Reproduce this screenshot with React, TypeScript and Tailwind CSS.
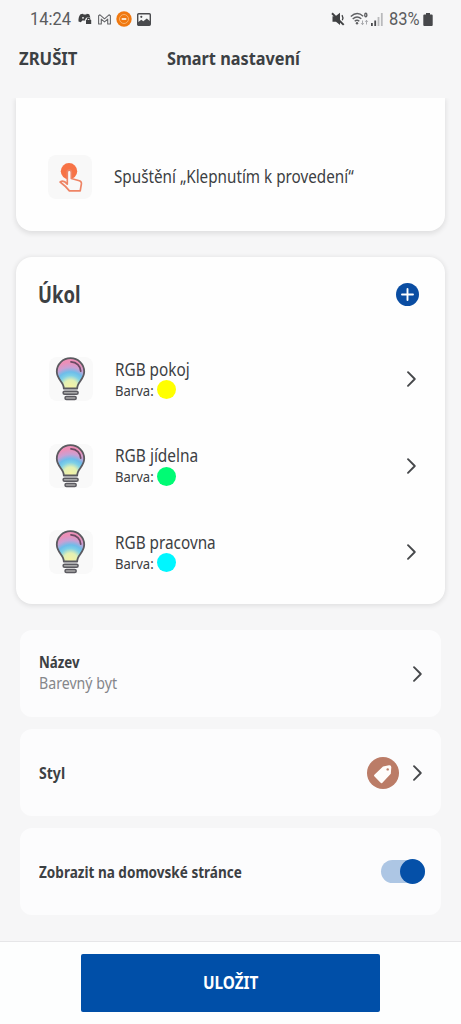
import { useState } from "react";
import clsx from "clsx";

const tasks = [
  { name: "RGB pokoj", color: "bg-[#ffff00]", fit: "scale-x-[0.85]" },
  { name: "RGB jídelna", color: "bg-[#00fb74]", fit: "scale-x-[0.858]" },
  { name: "RGB pracovna", color: "bg-[#00f6ff]", fit: "scale-x-[0.85]" },
];

// Narrow label, squeezed horizontally to get a condensed face
function Label({ text, className }: { text: string; className: string }) {
  return (
    <span
      className={clsx("block w-max origin-left whitespace-nowrap", className)}
    >
      {text}
    </span>
  );
}

function Chevron() {
  return (
    <svg width="12" height="18" viewBox="0 0 12 18" fill="none">
      <path
        d="M2 2.2 8.8 9 2 15.8"
        stroke="#46484b"
        strokeWidth="1.9"
        strokeLinecap="round"
        strokeLinejoin="round"
      />
    </svg>
  );
}

function Bulb({ id }: { id: string }) {
  return (
    <svg width="44" height="46" viewBox="0 0 44 46" fill="none">
      <defs>
        <radialGradient
          id={id}
          gradientUnits="userSpaceOnUse"
          cx="21.5"
          cy="30"
          r="29"
        >
          <stop offset="0" stopColor="#f6f2a4" />
          <stop offset="0.24" stopColor="#e3f0b4" />
          <stop offset="0.4" stopColor="#7fd0e6" />
          <stop offset="0.52" stopColor="#6dbdea" />
          <stop offset="0.68" stopColor="#c9a0d4" />
          <stop offset="0.85" stopColor="#ec90b8" />
        </radialGradient>
      </defs>
      <path
        d="M14.8 31.5c.2-6.7-7-8.6-7-16.9a13.7 13.4 0 0 1 27.4 0c0 8.3-7.2 10.2-7 16.9z"
        fill={`url(#${id})`}
        stroke="#5b5a60"
        strokeWidth="1.8"
        strokeLinejoin="round"
      />
      <path
        d="M22 4.8c5.6.2 9.4 4 9.7 9.2"
        stroke="#6b4a63"
        strokeWidth="1.8"
        strokeLinecap="round"
      />
      <rect
        x="14.1"
        y="34.2"
        width="15"
        height="3"
        rx="1.5"
        fill="#aaa"
        stroke="#5b5a60"
        strokeWidth="1.5"
      />
      <rect
        x="16"
        y="39.4"
        width="11.2"
        height="3"
        rx="1.5"
        fill="#aaa"
        stroke="#5b5a60"
        strokeWidth="1.5"
      />
    </svg>
  );
}

function TapIcon() {
  return (
    <svg width="44" height="44" viewBox="0 0 44 44" fill="none">
      <circle cx="21" cy="16.3" r="8.2" fill="#f77346" />
      <path
        d="M19.3 29.2V17.2a2 2 0 0 1 4 0v6.3l8 2.2c1.6.5 2.3 1.6 2.1 3.2l-1.2 7H21.4c-2.600-3.300-5.600-6.200-9.300-8.900 2.600-1.700 5.200-.3 7.200 2.200z"
        fill="#f8f8f8"
        stroke="#ee8465"
        strokeWidth="1.7"
        strokeLinejoin="round"
      />
    </svg>
  );
}

function StatusBar() {
  return (
    <div className="flex h-[38px] items-center pr-[28px] pl-[30px] font-[Roboto] text-[17.5px] text-[#5b5c5e]">
      <span className="w-[48px] origin-left scale-x-[0.94] whitespace-nowrap">
        14:24
      </span>
      <svg width="15" height="12" viewBox="0 0 15 12" fill="#3f4042">
        <path d="M2.5 1.2 5 .8l.6.6h2.6l.6-.6 2.400.4 1.200 3.300H8.800L7.200 6v1.500H4.400L2.800 9.200.5 8.400C.3 5.800.9 3.100 2.500 1.200z" />
        <circle cx="5" cy="4.8" r=".9" fill="#f6f7f7" />
        <path d="M8.7 7V6.400a1.900 1.900 0 0 1 3.800 0V7h.7v4H8v-4zm1-.1h1.800a.9.9 0 0 0-1.800 0z" />
      </svg>
      <svg
        className="ml-[5px]"
        width="13"
        height="11"
        viewBox="0 0 13 11"
        fill="none"
        stroke="#66676a"
        strokeWidth="1.1"
        strokeLinejoin="round"
      >
        <path d="M.6 10V1.800L2 .8l4.500 4L11 .8l1.400 1V10H9.700V5.100L6.500 7.900 3.300 5.100V10z" />
      </svg>
      <svg className="ml-[5px]" width="16" height="16" viewBox="0 0 16 16">
        <circle cx="8" cy="8" r="7.7" fill="#f0780f" />
        <circle
          cx="8"
          cy="8"
          r="4.5"
          fill="none"
          stroke="#f7b26e"
          strokeWidth="1"
        />
        <path d="M5.700 7h4.600v2H5.700z" fill="#fce3c8" />
      </svg>
      <svg className="ml-[5px]" width="14" height="13" viewBox="0 0 14 13">
        <rect
          x=".7"
          y=".7"
          width="12.6"
          height="11.6"
          rx="1"
          fill="#f6f7f7"
          stroke="#4a4b4e"
          strokeWidth="1.4"
        />
        <path d="M1 12V9.300L4.300 6.800 6.300 8.300 9.800 5.500 13 8.300V12z" fill="#4a4b4e" />
        <circle cx="4.3" cy="3.8" r="1.1" fill="#4a4b4e" />
      </svg>

      <svg
        className="ml-auto"
        width="14"
        height="14"
        viewBox="0 0 14 14"
        fill="#3f4042"
      >
        <path d="M1.500 4.200h3L9 .8v12.200L5 9.800H1.500z" />
        <path
          d="M11 3.200q1.600 2.500.3 5"
          fill="none"
          stroke="#3f4042"
          strokeWidth="1.3"
        />
        <path d="M1 1.200 12.700 12.900" stroke="#3f4042" strokeWidth="2" />
      </svg>
      <svg
        className="ml-[5px]"
        width="19"
        height="14"
        viewBox="0 0 19 14"
        fill="none"
        stroke="#5f6063"
        strokeWidth="1.4"
      >
        <path d="M.8 4.500q6.200-5.700 12.400-.3M2.700 7q4.300-4 8.600-.2M4.700 9.200q2.300-2 4.600 0" />
        <circle cx="7" cy="11.2" r="1.2" fill="#5f6063" stroke="none" />
        <path d="M15.800 1.200c1.300 0 1.500 3.600 0 3.600s-1.300-3.600 0-3.600z" />
        <path
          d="M12.500 8.500v4M11.200 11.200l1.300 1.500 1.300-1.500M16.500 12.500v-4M15.200 9.800l1.300-1.500 1.300 1.500"
          strokeWidth=".8"
          stroke="#96979a"
        />
      </svg>
      <svg className="ml-[2px]" width="12" height="13" viewBox="0 0 12 13">
        <path d="M0 10h1.800v3H0zM3.300 7.500h1.800V13H3.300z" fill="#4a4b4e" />
        <path d="M6.600 4h1.800v9H6.600zM9.900 0h1.800v13H9.900z" fill="#b9babc" />
      </svg>
      <span className="ml-[6px] w-[34px] origin-left scale-x-[0.94] whitespace-nowrap">
        83%
      </span>
      <svg width="10" height="13" viewBox="0 0 10 13" fill="#47484b">
        <path d="M3 0h4v1.500h1.700q1 0 1 1V12q0 1-1 1H1.300q-1 0-1-1V2.500q0-1 1-1H3z" />
      </svg>
    </div>
  );
}

export default function App() {
  const [visible, setVisible] = useState(true);

  return (
    <div className="flex h-[1024px] w-[461px] flex-col overflow-hidden bg-[#f6f6f7] font-['Noto_Sans','Open_Sans',sans-serif] text-[#3c4043]">
      <StatusBar />
      <header className="flex h-[60px] shrink-0 pt-[7px] pl-[19px] font-bold">
        <button className="block h-[26px] w-[148px] text-left">
          <Label
            text="ZRUŠIT"
            className="scale-x-[0.9] text-[18.5px] leading-[26px]"
          />
        </button>
        <h1>
          <Label
            text="Smart nastavení"
            className="scale-x-[0.88] text-[18.5px] leading-[26px]"
          />
        </h1>
      </header>

      <main className="h-[843px] shrink-0 overflow-hidden px-4">
        <section className="flex h-[133px] items-end rounded-b-[16px] bg-[#fefefe] pb-[32px] pl-[32px] shadow-[0_2px_5px_1px_rgba(0,0,0,0.09)]">
          <div className="flex h-[44px] items-center">
            <div className="h-[44px] w-[44px] rounded-lg bg-[#f8f8f8]">
              <TapIcon />
            </div>
            <Label
              text="Spuštění „Klepnutím k provedení“"
              className="mb-[2px] ml-[22px] scale-x-[0.847] text-[18px] leading-[24px]"
            />
          </div>
        </section>

        <section className="mt-[26px] h-[347px] rounded-[16px] bg-[#fefefe] shadow-[0_1px_5px_1px_rgba(0,0,0,0.09)]">
          <div className="flex h-[79px] items-center justify-between pr-[26px] pl-[22px]">
            <h2 className="pb-[4px]">
              <Label
                text="Úkol"
                className="scale-x-[0.82] text-[22.5px] leading-[30px] font-bold"
              />
            </h2>
            <button className="-mt-[5px] flex h-[23px] w-[23px] items-center justify-center rounded-full bg-[#0a4da2]">
              <svg width="13" height="13" viewBox="0 0 13 13">
                <path
                  d="M6.500 1v11M1 6.500h11"
                  stroke="#fff"
                  strokeWidth="1.9"
                  strokeLinecap="round"
                />
              </svg>
            </button>
          </div>
          <ul>
            {tasks.map((task, i) => (
              <li
                key={task.name}
                className="flex h-[86.5px] items-center pr-[27px] pl-[33px]"
              >
                <div className="h-[44px] w-[44px] rounded-lg bg-[#f9f9f9]">
                  <Bulb id={`bulb-${i}`} />
                </div>
                <div className="mb-[1px] ml-[22px] flex-1">
                  <Label
                    text={task.name}
                    className={clsx("text-[18px] leading-[22px]", task.fit)}
                  />
                  <div className="flex h-[20px] items-center">
                    <div className="w-[42px]">
                      <Label
                        text="Barva:"
                        className="scale-x-[0.87] text-[15px] leading-[20px]"
                      />
                    </div>
                    <span
                      className={clsx(
                        "h-[19px] w-[19px] shrink-0 rounded-full",
                        task.color
                      )}
                    />
                  </div>
                </div>
                <Chevron />
              </li>
            ))}
          </ul>
        </section>

        <div className="mt-[26px] flex flex-col gap-[12px] px-1">
          <div className="flex h-[87px] items-center justify-between rounded-[12px] bg-[#fcfcfd] pr-[17px] pl-[19px]">
            <div className="pb-[3px]">
              <Label
                text="Název"
                className="scale-x-[0.83] text-[16px] leading-[22px] font-bold"
              />
              <Label
                text="Barevný byt"
                className="scale-x-[0.885] text-[16px] leading-[21px] text-[#85868a]"
              />
            </div>
            <Chevron />
          </div>

          <div className="flex h-[87px] items-center rounded-[12px] bg-[#fcfcfd] pr-[17px] pl-[19px]">
            <Label
              text="Styl"
              className="scale-x-[0.88] text-[16px] leading-[22px] font-bold"
            />
            <span className="mr-[13px] ml-auto flex h-[32px] w-[32px] items-center justify-center rounded-full bg-[#bb7c67]">
              <svg width="32" height="32" viewBox="0 0 32 32">
                <path
                  d="M16 9.600 22 8.300q2.300-.3 2.300 1.900l-.5 6.600-8.600 9.100q-.8.700-1.600-.1l-6.300-6.500q-.7-.8.100-1.500z"
                  fill="#fffdfb"
                />
                <circle cx="20.7" cy="12.4" r="1.2" fill="#bb7c67" />
              </svg>
            </span>
            <Chevron />
          </div>

          <div className="flex h-[87px] items-center justify-between rounded-[12px] bg-[#fcfcfd] pr-[16px] pl-[19px]">
            <Label
              text="Zobrazit na domovské stránce"
              className="scale-x-[0.847] text-[16px] leading-[22px] font-bold"
            />
            <button
              role="switch"
              aria-checked={visible}
              onClick={() => setVisible(!visible)}
              className={clsx(
                "flex h-[23px] w-[44px] items-center rounded-full",
                visible ? "justify-end bg-[#adc6e4]" : "bg-gray-300"
              )}
            >
              <span className="h-[25px] w-[25px] shrink-0 rounded-full bg-[#0550a8]" />
            </button>
          </div>
        </div>
      </main>

      <footer className="flex h-[83px] shrink-0 justify-center border-t border-[#e6e6e8] bg-[#fdfefe] pt-[12px]">
        <button className="flex h-[58px] w-[299px] items-center justify-center rounded-[2px] bg-[#004fa8] text-white">
          <span className="mb-[2px] scale-x-[0.875] text-[17.5px] leading-[24px] font-bold">
            ULOŽIT
          </span>
        </button>
      </footer>
    </div>
  );
}
